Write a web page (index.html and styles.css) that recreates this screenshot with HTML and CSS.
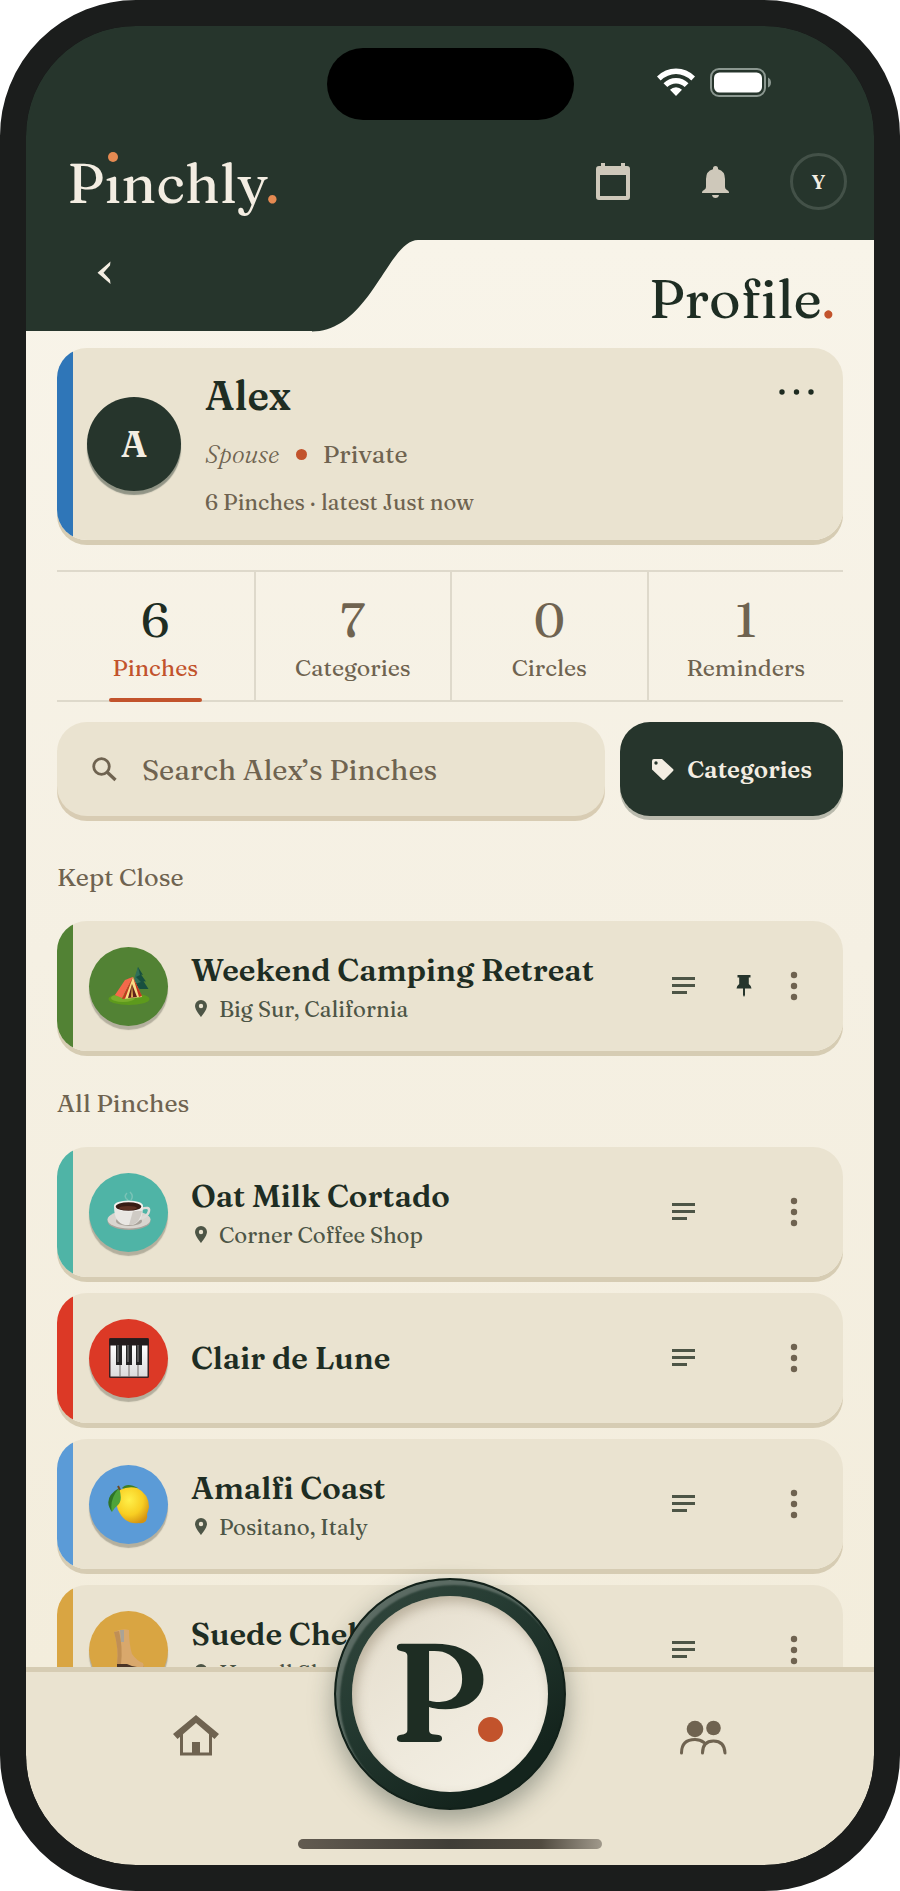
FILE: index.html
```html
<!DOCTYPE html>
<html lang="en">
  <head>
    <meta charset="UTF-8" />
    <meta name="viewport" content="width=device-width, initial-scale=1.0" />
    <title>Pinchly - Profile</title>
    <link rel="stylesheet" href="styles.css">
  </head>
  <body>
    <!-- shared icons -->
    <svg class="sprite" aria-hidden="true">
      <symbol id="icon-place" viewBox="0 0 12 17">
        <path d="M6 0a6 6 0 0 0-6 6c0 4 6 11 6 11s6-7 6-11a6 6 0 0 0-6-6zm0 8.2a2.2 2.2 0 1 1 0-4.4 2.2 2.2 0 0 1 0 4.4z"/>
      </symbol>
      <symbol id="icon-notes" viewBox="0 0 24 18">
        <path d="M0 0h23v3H0zM0 7h23v3H0zM0 14h15v3H0z"/>
      </symbol>
      <symbol id="icon-more" viewBox="0 0 8 30">
        <circle cx="4" cy="4" r="3.2"/><circle cx="4" cy="15" r="3.2"/><circle cx="4" cy="26" r="3.2"/>
      </symbol>
    </svg>

    <div class="phone">
      <header class="header">
        <div class="status-bar">
          <div class="island"></div>
          <div class="status-icons">
            <svg width="38" height="28" viewBox="0 0 38 28">
              <path fill="#fff" d="M0 8.500Q8 .5 19 .5t19 8l-3.700 4Q27.500 6 19 6T3.700 12.500zM6.500 15.200Q12 10 19 10t12.500 5.200l-3.800 3.900Q24 15.500 19 15.500t-8.700 3.600zM13 21.700Q15.500 19.200 19 19.200t6 2.500L19 28z"/>
            </svg>
            <svg width="62" height="29" viewBox="0 0 62 29">
              <rect x="1" y="1" width="54" height="27" rx="8" fill="none" stroke="#8b9790" stroke-width="2"/>
              <rect x="4" y="4.500" width="48" height="20" rx="5.500" fill="#fff"/>
              <path d="M58 9.500q3 1.500 3 5t-3 5z" fill="#8b9790"/>
            </svg>
          </div>
        </div>
        <div class="top-bar">
          <a href="#" class="logo">P<span class="logo-i">i</span>nchly<span class="logo-dot">.</span></a>
          <div class="top-actions">
            <button type="button" class="icon-btn" aria-label="Calendar">
              <svg width="34" height="37" viewBox="0 0 34 37" fill="#cec8ba">
                <path fill-rule="evenodd" d="M5 0h4v3h16V0h4v3h2q3 0 3 3v28q0 3-3 3H3q-3 0-3-3V6q0-3 3-3h2zM4 12v21h26V12z"/>
              </svg>
            </button>
            <button type="button" class="icon-btn" aria-label="Notifications">
              <svg width="27" height="32" viewBox="0 0 27 32" fill="#cec8ba">
                <path d="M13.500 0q2.600 0 2.600 3.200Q23 5 23 13v8q0 2 2 3 2 .8 2 2.500v.5H0v-.5Q0 24.800 2 24q2-1 2-3v-8q0-8 6.900-9.800Q10.900 0 13.500 0zM10 29h7q-.5 3-3.500 3T10 29z"/>
              </svg>
            </button>
            <button type="button" class="icon-btn user-btn">Y</button>
          </div>
        </div>
      </header>

      <main class="screen">
        <div class="title-row">
          <div class="title-tab">
            <button type="button" class="back-btn" aria-label="Back">
              <svg width="14" height="24" viewBox="0 0 14 24" fill="#f3ede2">
                <path d="M13.500.5 13 4.500 6.500 11.800l6.500 7 .5 4.200L.5 11.800z"/>
              </svg>
            </button>
          </div>
          <svg class="title-curve" width="106" height="92" viewBox="0 0 106 92">
            <path fill="#26352c" d="M0 0h106C76 0 58 91.500 0 91.500z"/>
          </svg>
          <h1 class="title">Profile<span class="accent">.</span></h1>
        </div>

        <div class="content">
          <section class="card person">
            <div class="avatar">A</div>
            <div class="person-info">
              <h2>Alex</h2>
              <p class="person-meta"><em>Spouse</em><span class="bullet"></span>Private</p>
              <p class="person-latest">6 Pinches · latest Just now</p>
            </div>
            <button type="button" class="person-more" aria-label="More options">
              <svg width="36" height="6" viewBox="0 0 36 6" fill="#1e2b20">
                <circle cx="3" cy="3" r="2.700"/><circle cx="17.500" cy="3" r="2.700"/><circle cx="32" cy="3" r="2.700"/>
              </svg>
            </button>
          </section>

          <nav class="stats">
            <a href="#" class="stat active"><strong>6</strong><span>Pinches</span></a>
            <a href="#" class="stat"><strong>7</strong><span>Categories</span></a>
            <a href="#" class="stat"><strong>0</strong><span>Circles</span></a>
            <a href="#" class="stat"><strong>1</strong><span>Reminders</span></a>
          </nav>

          <form class="search-row">
            <label class="search" for="search">
              <svg width="25" height="25" viewBox="0 0 25 25" fill="none" stroke="#6f6350">
                <circle cx="9.500" cy="9.500" r="7.800" stroke-width="2.800"/>
                <path d="M15 15l8.500 8" stroke-width="3.200"/>
              </svg>
              <input type="text" id="search" placeholder="Search Alex’s Pinches" aria-label="Search Alex’s Pinches">
            </label>
            <button type="button" class="categories-btn">
              <svg width="23" height="23" viewBox="0 0 23 23" fill="#f3ede2">
                <path fill-rule="evenodd" d="M3 1h8l11 10q1 1 0 2l-8.500 8.500q-1 1-2 0L1 11.500V3q0-2 2-2zm2 2.300a1.700 1.700 0 1 0 0 3.400 1.700 1.700 0 0 0 0-3.400z"/>
              </svg>
              Categories
            </button>
          </form>

          <section class="group">
            <h3>Kept Close</h3>
            <article class="card pinch green">
              <div class="pinch-icon">
                <svg width="42" height="40" viewBox="0 0 42 40">
                  <ellipse cx="21" cy="33" rx="20.500" ry="6" fill="#5d9a1c"/>
                  <ellipse cx="15" cy="32" rx="12" ry="4" fill="#79ad2b"/>
                  <path fill="#174f3f" d="M30 1l5 8-2-.5 5 7-2.500-.3 5 7.800H25z"/>
                  <path fill="#2f6f58" d="M30 1l2 8-4 2 5 5-6 2 5 5H23l3-7 1-6z"/>
                  <path fill="#d9442b" d="M25 11L14 31 7 29 20 13z"/>
                  <path fill="#f4694b" d="M25 11l-8 3L7 29l7 3z"/>
                  <path fill="#f9dc86" d="M25 11l9 20-19 2z"/>
                  <path fill="#c3331f" d="M25 11l9 19-3 1zM25 11L14 33l3-.3z"/>
                  <path fill="#60211a" d="M24 18l5 13-9 1z"/>
                  <path fill="#e9b451" d="M24 18l1 13-2 .5z"/>
                </svg>
              </div>
              <div class="pinch-info">
                <h4>Weekend Camping Retreat</h4>
                <p><svg width="12" height="17"><use href="#icon-place"/></svg>Big Sur, California</p>
              </div>
              <div class="pinch-actions">
                <button type="button" class="notes-btn" aria-label="Notes"><svg width="24" height="18"><use href="#icon-notes"/></svg></button>
                <button type="button" class="pin-btn" aria-label="Unpin">
                  <svg width="16" height="22" viewBox="0 0 16 22"><path d="M1.500 0h13v2.500h-1.700V9Q15.500 11 15.500 13.500H9V20l-1 2-1-2v-6.500H.5Q.5 11 3.200 9V2.500H1.500z"/></svg>
                </button>
                <button type="button" class="more-btn" aria-label="More"><svg width="8" height="30"><use href="#icon-more"/></svg></button>
              </div>
            </article>
          </section>

          <section class="group">
            <h3>All Pinches</h3>
            <article class="card pinch teal">
              <div class="pinch-icon">
                <svg width="44" height="42" viewBox="0 0 44 42">
                  <path d="M21 9q-5-3-1-7M24 9q3-4-1-8" fill="none" stroke="#8cc9bd" stroke-width="1.500" opacity=".7"/>
                  <ellipse cx="22" cy="30" rx="21.500" ry="9" fill="#aaa49d"/>
                  <ellipse cx="22" cy="28.500" rx="21.500" ry="9" fill="#d9d5cf"/>
                  <ellipse cx="22" cy="30" rx="13" ry="5" fill="#a9a39b"/>
                  <path d="M34 18q9-3 8 2-1 6-10 8" fill="none" stroke="#dedbd7" stroke-width="2.500"/>
                  <path d="M7 15q0 17 11 19h7q11-2 11-19z" fill="#e9e7e3"/>
                  <path d="M26 20h9q-2 12-10 14h-3z" fill="#cfcbc5"/>
                  <ellipse cx="21.500" cy="15" rx="14.500" ry="5.500" fill="#f5f3f0"/>
                  <ellipse cx="21.500" cy="15.500" rx="12.800" ry="4.300" fill="#371c14"/>
                  <ellipse cx="21" cy="17" rx="9" ry="2" fill="#5b3022"/>
                </svg>
              </div>
              <div class="pinch-info">
                <h4>Oat Milk Cortado</h4>
                <p><svg width="12" height="17"><use href="#icon-place"/></svg>Corner Coffee Shop</p>
              </div>
              <div class="pinch-actions">
                <button type="button" class="notes-btn" aria-label="Notes"><svg width="24" height="18"><use href="#icon-notes"/></svg></button>
                <button type="button" class="more-btn" aria-label="More"><svg width="8" height="30"><use href="#icon-more"/></svg></button>
              </div>
            </article>

            <article class="card pinch red">
              <div class="pinch-icon">
                <svg width="40" height="40" viewBox="0 0 40 40">
                  <defs>
                    <linearGradient id="keys" x1="0" y1="0" x2="0" y2="1"><stop offset="0" stop-color="#fff"/><stop offset="1" stop-color="#dcdcdc"/></linearGradient>
                  </defs>
                  <rect width="40" height="40" rx="1.500" fill="#3b2021"/>
                  <rect x="1.500" y="7" width="37" height="31.500" fill="url(#keys)"/>
                  <rect x=".5" y=".5" width="39" height="7" fill="#241d1e"/>
                  <path d="M11 7v32M20 7v32M29 7v32" stroke="#77706f"/>
                  <path d="M7 7h6v20H7zM17 7h6v20h-6zM27 7h6v20h-6z" fill="#242424"/>
                  <path d="M8 7h2v17H8zM18 7h2v17h-2zM28 7h2v17h-2z" fill="#555"/>
                </svg>
              </div>
              <div class="pinch-info">
                <h4>Clair de Lune</h4>
              </div>
              <div class="pinch-actions">
                <button type="button" class="notes-btn" aria-label="Notes"><svg width="24" height="18"><use href="#icon-notes"/></svg></button>
                <button type="button" class="more-btn" aria-label="More"><svg width="8" height="30"><use href="#icon-more"/></svg></button>
              </div>
            </article>

            <article class="card pinch blue">
              <div class="pinch-icon">
                <svg width="42" height="42" viewBox="0 0 42 42">
                  <defs>
                    <radialGradient id="lemon" cx=".4" cy=".35" r=".7"><stop offset="0" stop-color="#fff04a"/><stop offset=".6" stop-color="#f8ce22"/><stop offset="1" stop-color="#d59412"/></radialGradient>
                  </defs>
                  <path fill="#3c7d24" d="M14 5q5-6 16 0-6 5-16 0z"/>
                  <path fill="url(#lemon)" d="M12 7Q20 3 29 5q12 6 12 19-1 5-2 7 1 3-1 7-3 3-7 2Q17 42 10 27 5 14 12 7z"/>
                  <path fill="#4ea33a" d="M11 5q4 12-1 17-4 3-6 7-6-13 7-24z"/>
                  <path fill="#2e7426" d="M11 5Q1 17 4 29-6 15 11 5z"/>
                  <path d="M12 7l-2-4" stroke="#6c4a25" stroke-width="2"/>
                </svg>
              </div>
              <div class="pinch-info">
                <h4>Amalfi Coast</h4>
                <p><svg width="12" height="17"><use href="#icon-place"/></svg>Positano, Italy</p>
              </div>
              <div class="pinch-actions">
                <button type="button" class="notes-btn" aria-label="Notes"><svg width="24" height="18"><use href="#icon-notes"/></svg></button>
                <button type="button" class="more-btn" aria-label="More"><svg width="8" height="30"><use href="#icon-more"/></svg></button>
              </div>
            </article>

            <article class="card pinch gold">
              <div class="pinch-icon">
                <svg width="30" height="42" viewBox="0 0 30 42">
                  <path fill="#4a3426" d="M3 33l10 1 17 3v4H15l-4-3H3z"/>
                  <path fill="#d9a86c" d="M0 3q8-4 15-2 0 14 3 24 5 7 11 9l1 4q-9 1-17-3H3Q5 20 0 3z"/>
                  <path fill="#c08f55" d="M0 3l5-1q4 16 2 33H3Q5 20 0 3z"/>
                  <path fill="#aaa397" d="M6 1h4v12H7z"/>
                </svg>
              </div>
              <div class="pinch-info">
                <h4>Suede Chelsea Boots</h4>
                <p><svg width="12" height="17"><use href="#icon-place"/></svg>Howell Shop</p>
              </div>
              <div class="pinch-actions">
                <button type="button" class="notes-btn" aria-label="Notes"><svg width="24" height="18"><use href="#icon-notes"/></svg></button>
                <button type="button" class="more-btn" aria-label="More"><svg width="8" height="30"><use href="#icon-more"/></svg></button>
              </div>
            </article>
          </section>
        </div>
      </main>

      <nav class="tab-bar">
        <a href="#" class="tab" aria-label="Home">
          <svg width="46" height="41" viewBox="0 0 46 41">
            <path d="M8.500 18v21h29V18" fill="none" stroke="#6f6350" stroke-width="3"/>
            <path d="M23 0l23 19-4.500 5L23 8 4.500 24 0 19z" fill="#6f6350"/>
            <path d="M19 27h8v12h-8z" fill="#6f6350"/>
          </svg>
        </a>
        <a href="#" class="tab" aria-label="Circles">
          <svg width="48" height="36" viewBox="0 0 48 36">
            <circle cx="16" cy="9" r="8.300" fill="#6f6350"/>
            <circle cx="34.500" cy="8" r="7.300" fill="#6f6350"/>
            <path d="M2.500 33Q2.500 19.500 16 19.500q5 0 9 3M23.500 33q0-12 11-12t11.500 12" fill="none" stroke="#6f6350" stroke-width="3" stroke-linecap="round"/>
          </svg>
        </a>
        <button type="button" class="pinch-btn"><span class="pinch-face">P<span class="pinch-dot"></span></span></button>
        <div class="home-indicator"></div>
      </nav>
    </div>
  </body>
</html>
```

FILE: styles.css
```css
* {
  box-sizing: border-box;
  margin: 0;
  padding: 0;
}

body {
  background-color: white;
  color: #1e2d23;
  font-family: Fraunces, "Liberation Serif", serif;
}

button {
  border: none;
  background: none;
  font-family: inherit;
  color: inherit;
  cursor: pointer;
}

a {
  color: inherit;
  text-decoration: none;
}

svg {
  flex-shrink: 0;
}

.sprite {
  position: absolute;
  width: 0;
  height: 0;
}

.accent {
  color: #c2532c;
}

.phone {
  display: flex;
  flex-direction: column;
  height: 100vh;
  border: 26px solid #1b1d1c;
  border-radius: 136px;
  background-color: #1b1d1c;
  overflow: hidden;
}

/* header */
.header {
  background-color: #26352c;
  border-radius: 110px 110px 0 0;
  padding-top: 22px;
}

.status-bar {
  display: grid;
  grid-template-columns: 1fr 247px 1fr;
  align-items: center;
}

.island {
  grid-column: 2;
  height: 72px;
  border-radius: 36px;
  background-color: black;
}

.status-icons {
  display: flex;
  align-items: center;
  gap: 15px;
  padding: 0 0 4px 83px;
}

.top-bar {
  display: flex;
  align-items: center;
  justify-content: space-between;
  height: 120px;
  padding: 3px 27px 0 41px;
}

.logo {
  padding-top: 3px;
  color: #f3ede2;
  font-size: 56px;
  line-height: 64px;
}

/* hides the letter's own dot, the orange one is drawn above it */
.logo-i {
  position: relative;
  color: transparent;
  background: linear-gradient(transparent 36%, #f3ede2 36%);
  -webkit-background-clip: text;
  background-clip: text;
}

.logo-i::before {
  content: "";
  position: absolute;
  top: 4px;
  left: calc(50% - 5px);
  width: 10px;
  height: 10px;
  border-radius: 50%;
  background-color: #e58a52;
}

.logo-dot {
  color: #e58a52;
}

.top-actions {
  display: flex;
  gap: 46px;
}

.icon-btn {
  display: flex;
  align-items: center;
  justify-content: center;
  width: 57px;
  height: 57px;
}

.user-btn {
  border: 3px solid #435148;
  border-radius: 50%;
  color: #f3ede2;
  font-size: 20px;
  font-weight: 600;
}

/* page title */
.screen {
  flex: 1;
  min-height: 0;
  overflow: hidden;
  background: linear-gradient(#f8f4e9, #f5f0e3 50%, #f3eddc);
}

.title-row {
  display: flex;
  height: 91px;
}

.title-tab {
  width: 286px;
  background-color: #26352c;
}

.back-btn {
  display: flex;
  align-items: center;
  justify-content: center;
  width: 64px;
  height: 66px;
  margin-left: 46px;
}

.title {
  flex: 1;
  padding: 27px 39px 0 0;
  text-align: right;
  font-size: 54px;
  font-weight: normal;
  line-height: 64px;
}

.content {
  padding: 17px 31px;
}

.card {
  display: flex;
  align-items: center;
  border-radius: 30px;
  background: linear-gradient(to right, var(--stripe) 16px, #eae3d0 16px);
  box-shadow: 0 5px 0 #d6ccb3;
}

/* person card */
.person {
  --stripe: #2f76b8;
  padding: 24px 24px 24px 30px;
}

.avatar {
  display: flex;
  align-items: center;
  justify-content: center;
  width: 94px;
  height: 94px;
  border-radius: 50%;
  background-color: #26352c;
  box-shadow: 0 4px 1px rgba(38, 53, 44, 0.45);
  color: #f3ede2;
  font-size: 36px;
  font-weight: 600;
}

.person-info {
  flex: 1;
  display: flex;
  flex-direction: column;
  gap: 18px;
  padding-left: 24px;
  color: #6f6350;
}

.person-info h2 {
  color: #1e2d23;
  font-size: 40px;
  font-weight: 600;
  line-height: 48px;
}

.person-meta {
  display: flex;
  align-items: center;
  gap: 16px;
  font-size: 25px;
  line-height: 32px;
}

.person-meta em {
  font-weight: 300;
}

.bullet {
  width: 11px;
  height: 11px;
  border-radius: 50%;
  background-color: #c2532c;
}

.person-latest {
  font-size: 22px;
  line-height: 28px;
}

.person-more {
  display: flex;
  align-self: flex-start;
  padding: 17px 4px;
}

/* stats */
.stats {
  display: grid;
  grid-template-columns: repeat(4, 1fr);
  margin: 30px 0 20px;
  border-top: 2px solid #ded9cb;
  border-bottom: 2px solid #ded9cb;
}

.stat {
  position: relative;
  display: flex;
  flex-direction: column;
  align-items: center;
  gap: 6px;
  padding: 22px 0 16px;
  color: #6f6350;
}

.stat + .stat {
  border-left: 2px solid #ded9cb;
}

.stat strong {
  font-size: 48px;
  font-weight: normal;
  line-height: 52px;
}

.stat span {
  font-size: 23px;
  line-height: 32px;
}

.stat.active strong {
  color: #1e2d23;
}

.stat.active span {
  color: #c2532c;
}

.stat.active::after {
  content: "";
  position: absolute;
  bottom: -2px;
  width: 93px;
  height: 4px;
  border-radius: 2px;
  background-color: #c2532c;
}

/* search */
.search-row {
  display: flex;
  gap: 15px;
  height: 94px;
  margin-bottom: 45px;
}

.search {
  flex: 1;
  min-width: 0;
  display: flex;
  align-items: center;
  gap: 25px;
  padding: 0 20px 0 35px;
  border-radius: 30px;
  background-color: #eae3d0;
  box-shadow: 0 5px 0 #d8ccb3;
}

.search input {
  flex: 1;
  min-width: 0;
  border: none;
  outline: none;
  background: none;
  color: #6f6350;
  font-family: inherit;
  font-size: 29px;
}

.search input::placeholder {
  color: #6f6350;
}

.categories-btn {
  display: flex;
  align-items: center;
  gap: 13px;
  padding: 0 31px;
  border-radius: 30px;
  background-color: #26352c;
  box-shadow: 0 4px 0 #b9baad;
  color: #f3ede2;
  font-size: 24px;
  font-weight: 600;
}

/* pinches */
.group {
  display: flex;
  flex-direction: column;
  gap: 16px;
  margin-bottom: 36px;
}

.group h3 {
  margin-bottom: 12px;
  color: #6f6350;
  font-size: 25px;
  font-weight: 500;
  line-height: 32px;
}

.pinch {
  height: 130px;
  padding: 0 29px 0 32px;
}

.green { --stripe: #528234; }
.teal { --stripe: #4fb4a6; }
.red { --stripe: #dc3926; }
.blue { --stripe: #5b9bd7; }
.gold { --stripe: #d9a542; }

.pinch-icon {
  display: flex;
  align-items: center;
  justify-content: center;
  width: 79px;
  height: 79px;
  border-radius: 50%;
  background-color: var(--stripe);
  box-shadow: 0 4px 1px rgba(80, 80, 65, 0.35);
}

.pinch-info {
  flex: 1;
  display: flex;
  flex-direction: column;
  gap: 5px;
  padding-left: 23px;
}

.pinch-info h4 {
  font-size: 31px;
  font-weight: 600;
  line-height: 40px;
}

.pinch-info p {
  display: flex;
  align-items: center;
  gap: 12px;
  padding-left: 4px;
  color: #4d5546;
  fill: #4d5546;
  font-size: 22px;
  line-height: 28px;
}

.pinch-actions {
  display: grid;
  grid-template-columns: 60px 60px 40px;
  justify-items: center;
  align-items: center;
}

.pinch-actions button {
  display: flex;
}

.notes-btn {
  fill: #4d5546;
}

.pin-btn {
  fill: #26352c;
}

.more-btn {
  grid-column: 3;
  fill: #6f6350;
}

/* bottom bar */
.tab-bar {
  position: relative;
  display: flex;
  justify-content: space-between;
  height: 198px;
  padding: 43px 147px 0 147px;
  border-top: 5px solid #d6ccb3;
  border-radius: 0 0 110px 110px;
  background-color: #eae3d0;
}

.tab {
  display: flex;
  align-items: flex-end;
  height: 41px;
}

.pinch-btn {
  position: absolute;
  top: -94px;
  left: calc(50% - 116px);
  display: flex;
  align-items: center;
  justify-content: center;
  width: 232px;
  height: 232px;
  border: 2px solid #12211a;
  border-radius: 50%;
  background: linear-gradient(145deg, #35493f, #263c33 35%, #14241d 80%);
  box-shadow: 0 10px 26px rgba(38, 53, 44, 0.4), inset 4px 5px 2px #5b6b63;
}

.pinch-face {
  display: flex;
  align-items: baseline;
  justify-content: center;
  width: 196px;
  height: 196px;
  padding-right: 8px;
  border-radius: 50%;
  background: linear-gradient(145deg, #e4dccb, #efeadd 60%, #f5f1e6);
  box-shadow: inset 4px 6px 12px rgba(110, 95, 70, 0.35);
  font-size: 140px;
  font-weight: 600;
  line-height: 192px;
}

.pinch-dot {
  width: 25px;
  height: 25px;
  margin-left: -10px;
  border-radius: 50%;
  background-color: #c2532c;
}

.home-indicator {
  position: absolute;
  bottom: 16px;
  left: calc(50% - 152px);
  width: 304px;
  height: 10px;
  border-radius: 5px;
  background: linear-gradient(to right, #625b50, #403e37 50%, #514b40 80%, #a0998b);
}
```
